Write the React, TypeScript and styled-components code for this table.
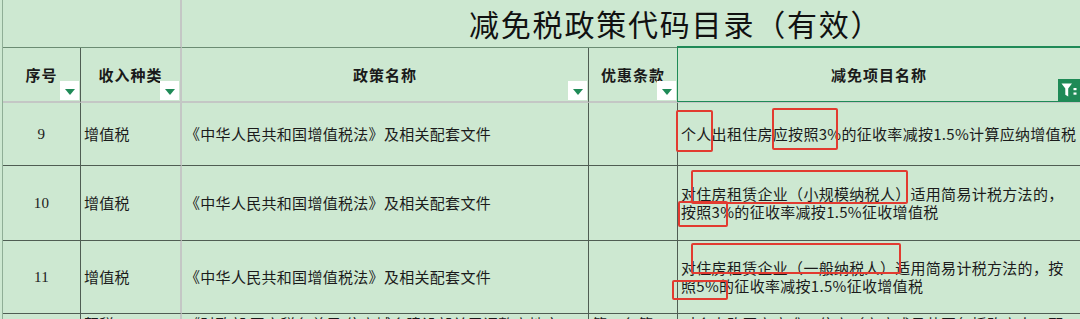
import React from "react";
import styled, { createGlobalStyle, css } from "styled-components";

const BG = "#cde8d1";
const GRID = "#4f5d53";
const FREEZE = "#c4c7c5";
const GREEN = "#1f8a57";
const RED = "#e23b30";

const GlobalStyle = createGlobalStyle`
  html, body {
    margin: 0;
    padding: 0;
    background: ${BG};
  }
  body {
    font-family: "Noto Sans CJK SC", "Noto Sans", sans-serif;
    color: #1b1b1b;
    overflow: hidden;
  }
`;

const Sheet = styled.div`
  position: relative;
  width: 1080px;
  height: 319px;
  overflow: hidden;
  box-sizing: border-box;
  padding-left: 2px;
  background: ${BG};
`;

const Grid = styled.div`
  display: grid;
  grid-template-columns: 78px 101px 407px 89px 402px;
  grid-template-rows: 48px 55px 63px 75px 73px 40px;
  border-left: 1px solid #8fae96;
`;

type Edge = "grid" | "freeze" | "none";

const edgeRule = (edge?: Edge) =>
  edge === "freeze"
    ? `2px solid ${FREEZE}`
    : edge === "none"
    ? "0"
    : `1px solid ${GRID}`;

const TitleBlank = styled.div`
  grid-column: 1 / 3;
  border-right: 2px solid ${FREEZE};
  border-bottom: 1px solid #6b8c73;
`;

const TitleCell = styled.div`
  grid-column: 3 / 6;
  display: flex;
  align-items: center;
  padding: 0 0 2px 287px;
  border-bottom: 1px solid #6b8c73;
  font-size: 30px;
  letter-spacing: 1.8px;
  color: #111;
  white-space: nowrap;
`;

const HeadCell = styled.div<{ $edge?: Edge; $selected?: boolean }>`
  position: relative;
  box-sizing: border-box;
  display: flex;
  align-items: center;
  justify-content: center;
  border-right: ${(p) => edgeRule(p.$edge)};
  border-bottom: 2px solid ${FREEZE};
  font-size: 15px;
  font-weight: 700;
  letter-spacing: 1px;
  color: #1a1a1a;
  ${(p) =>
    p.$selected &&
    css`
      &::before {
        content: "";
        position: absolute;
        top: -2px;
        left: -1px;
        right: 0;
        bottom: -1px;
        border-top: 2px solid ${GREEN};
        border-left: 1px solid ${GREEN};
        border-bottom: 1px solid ${GREEN};
        pointer-events: none;
      }
    `}
`;

const DropButton = styled.span`
  position: absolute;
  right: 1px;
  bottom: 1px;
  width: 19px;
  height: 19px;
  background: #fff;
  display: flex;
  align-items: center;
  justify-content: center;

  &::after {
    content: "";
    border-left: 5px solid transparent;
    border-right: 5px solid transparent;
    border-top: 6px solid ${GREEN};
    margin-top: 2px;
  }
`;

const FilterButton = styled.span`
  position: absolute;
  right: 0;
  bottom: 0;
  width: 22px;
  height: 22px;
  background: ${GREEN};
  display: flex;
  align-items: center;
  justify-content: center;
`;

const Cell = styled.div<{ $align?: "left" | "center"; $edge?: Edge; $top?: boolean; $serif?: boolean }>`
  box-sizing: border-box;
  display: flex;
  flex-direction: column;
  justify-content: ${(p) => (p.$top ? "flex-start" : "center")};
  align-items: ${(p) => (p.$align === "center" ? "center" : "flex-start")};
  padding: ${(p) => (p.$top ? "1px 3px 0" : "0 3px")};
  border-right: ${(p) => edgeRule(p.$edge)};
  border-bottom: ${(p) => (p.$top ? "0" : `1px solid ${GRID}`)};
  font-family: ${(p) =>
    p.$serif
      ? `"Liberation Serif", "Noto Sans CJK SC", serif`
      : `"Noto Sans CJK SC", "Noto Sans", sans-serif`};
  font-size: 15px;
  line-height: 18px;
  letter-spacing: 0.3px;
  white-space: nowrap;
  overflow: hidden;
`;

const Line = styled.div`
  display: block;
`;

const Mark = styled.span<{ $x: number; $y: number; $w: number; $h: number }>`
  position: absolute;
  left: ${(p) => p.$x}px;
  top: ${(p) => p.$y}px;
  width: ${(p) => p.$w}px;
  height: ${(p) => p.$h}px;
  box-sizing: border-box;
  border: 2px solid ${RED};
  border-radius: 2px;
  pointer-events: none;
`;

const FunnelIcon = () => (
  <svg width="20" height="20" viewBox="0 0 20 20">
    <path d="M2.5 3.5 H13 L9.2 8.5 V16.5 L6.3 14.8 V8.5 Z" fill="#fff" />
    <rect x="14.5" y="8" width="3" height="2.2" fill="#fff" />
    <rect x="14.5" y="12.5" width="3" height="2.2" fill="#fff" />
  </svg>
);

type Row = {
  no: string;
  kind: string;
  policy: string;
  clause: string;
  lines: string[];
};

const rows: Row[] = [
  {
    no: "9",
    kind: "增值税",
    policy: "《中华人民共和国增值税法》及相关配套文件",
    clause: "",
    lines: ["个人出租住房应按照3%的征收率减按1.5%计算应纳增值税"],
  },
  {
    no: "10",
    kind: "增值税",
    policy: "《中华人民共和国增值税法》及相关配套文件",
    clause: "",
    lines: ["对住房租赁企业（小规模纳税人）适用简易计税方法的，", "按照3%的征收率减按1.5%征收增值税"],
  },
  {
    no: "11",
    kind: "增值税",
    policy: "《中华人民共和国增值税法》及相关配套文件",
    clause: "",
    lines: ["对住房租赁企业（一般纳税人）适用简易计税方法的，按", "照5%的征收率减按1.5%征收增值税"],
  },
];

const partial: Row = {
  no: "221",
  kind: "契税",
  policy: "《财政部 国家税务总局 住房城乡建设部关于调整房地产",
  clause: "第一条第",
  lines: ["对个人购买家庭唯一住房（家庭成员范围包括购房人、配"],
};

// red annotation boxes drawn over the sheet
const marks = [
  { x: 676, y: 110, w: 37, h: 42 },
  { x: 772, y: 108, w: 66, h: 42 },
  { x: 691, y: 170, w: 217, h: 34 },
  { x: 678, y: 201, w: 50, h: 26 },
  { x: 691, y: 243, w: 210, h: 31 },
  { x: 672, y: 280, w: 56, h: 20 },
];

const headers = ["序号", "收入种类", "政策名称", "优惠条款"];

const App: React.FC = () => {
  return (
    <>
      <GlobalStyle />
      <Sheet>
        <Grid>
          <TitleBlank />
          <TitleCell>减免税政策代码目录（有效）</TitleCell>

          {headers.map((h, i) => (
            <HeadCell key={h} $edge={i === 1 ? "freeze" : "grid"}>
              {h}
              <DropButton />
            </HeadCell>
          ))}
          <HeadCell $edge="none" $selected>
            减免项目名称
            <FilterButton>
              <FunnelIcon />
            </FilterButton>
          </HeadCell>

          {rows.map((r) => (
            <React.Fragment key={r.no}>
              <Cell $align="center" $serif>
                {r.no}
              </Cell>
              <Cell $edge="freeze">{r.kind}</Cell>
              <Cell>{r.policy}</Cell>
              <Cell>{r.clause}</Cell>
              <Cell $edge="none">
                {r.lines.map((l) => (
                  <Line key={l}>{l}</Line>
                ))}
              </Cell>
            </React.Fragment>
          ))}

          <Cell $align="center" $serif $top>
            {partial.no}
          </Cell>
          <Cell $edge="freeze" $top>
            {partial.kind}
          </Cell>
          <Cell $top>{partial.policy}</Cell>
          <Cell $top>{partial.clause}</Cell>
          <Cell $edge="none" $top>
            {partial.lines.map((l) => (
              <Line key={l}>{l}</Line>
            ))}
          </Cell>
        </Grid>

        {marks.map((m, i) => (
          <Mark key={i} $x={m.x} $y={m.y} $w={m.w} $h={m.h} />
        ))}
      </Sheet>
    </>
  );
};

export default App;
